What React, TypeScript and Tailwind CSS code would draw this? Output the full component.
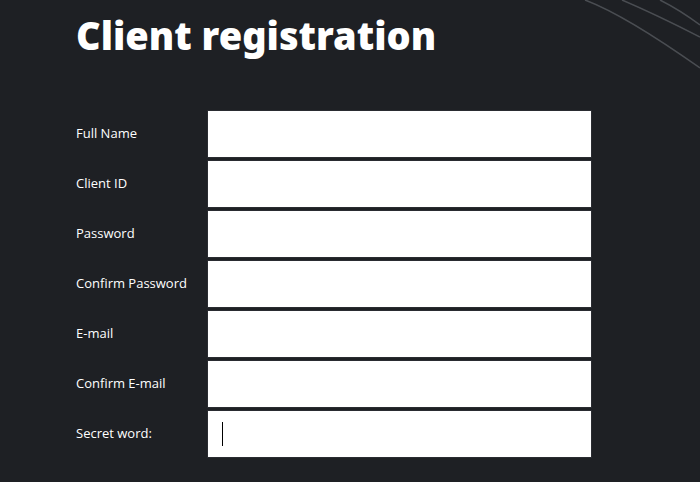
const fields = [
  "Full Name",
  "Client ID",
  "Password",
  "Confirm Password",
  "E-mail",
  "Confirm E-mail",
  "Secret word:",
];

export default function App() {
  return (
    <div className="relative h-[482px] w-[700px] overflow-hidden bg-[#1e2024] font-['Open_Sans',sans-serif]">
      {/* decorative arcs */}
      <svg
        className="absolute right-0 top-0"
        width="140"
        height="80"
        viewBox="0 0 140 80"
        fill="none"
        stroke="#4a4d52"
        strokeWidth="1.5"
      >
        <path d="M25 0 Q65 15 140 68" />
        <path d="M62 0 Q95 14 140 37" />
        <path d="M100 0 Q120 10 140 25" />
      </svg>

      <h1 className="pl-[76px] pt-[10px] font-['Noto_Sans',sans-serif] text-[38px] font-black leading-[50px] text-white [font-variant-ligatures:none]">
        Client registration
      </h1>

      <div className="mt-[50px] flex flex-col gap-[2px] pl-[76px]">
        {fields.map((label, i) => (
          <div key={label} className="flex items-center">
            <label className="w-[131px] text-[13px] text-white">{label}</label>
            <div className="relative">
              <input
                type={label.includes("Password") ? "password" : "text"}
                className="block h-[48px] w-[385px] border border-[#2a2c31] bg-white px-3 outline-none"
              />
              {i === fields.length - 1 && (
                <span className="absolute left-[15px] top-[12px] h-[24px] w-px bg-black" />
              )}
            </div>
          </div>
        ))}
      </div>
    </div>
  );
}
